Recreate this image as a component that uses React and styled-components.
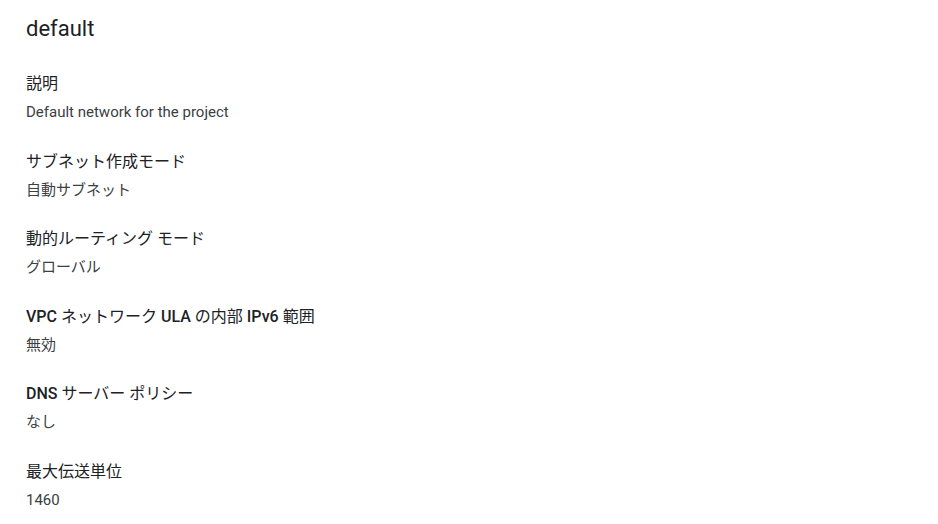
import React from 'react';
import styled, { createGlobalStyle } from 'styled-components';

const GlobalStyle = createGlobalStyle`
  body {
    margin: 0;
    background: #fff;
    font-family: Roboto, "Noto Sans CJK JP", "Liberation Sans", sans-serif;
  }
`;

const Page = styled.div`
  padding: 15px 26px 0;
`;

const Title = styled.h1`
  margin: 0 0 29px;
  font-size: 22px;
  line-height: 28px;
  font-weight: 400;
  color: #202124;
`;

const Section = styled.dl`
  margin: 0 0 27.6px;
`;

const Label = styled.dt`
  font-size: 16px;
  line-height: 24px;
  font-weight: 400;
  color: #202124;
  margin: 0 0 6px;
`;

// latin runs in the labels are medium, the japanese stays regular
const Latin = styled.span`
  font-weight: 500;
`;

const Value = styled.dd`
  margin: 0;
  font-size: 15px;
  line-height: 20px;
  color: #3c4043;
`;

const details = [
  { label: '説明', value: 'Default network for the project' },
  { label: 'サブネット作成モード', value: '自動サブネット' },
  { label: '動的ルーティング モード', value: 'グローバル' },
  { label: 'VPC ネットワーク ULA の内部 IPv6 範囲', value: '無効' },
  { label: 'DNS サーバー ポリシー', value: 'なし' },
  { label: '最大伝送単位', value: '1460' },
];

const renderLabel = (text) =>
  text
    .split(/([A-Za-z0-9]+)/)
    .map((part, i) =>
      /^[A-Za-z0-9]+$/.test(part) ? <Latin key={i}>{part}</Latin> : part
    );

export default function App() {
  return (
    <Page>
      <GlobalStyle />
      <Title>default</Title>
      {details.map((d) => (
        <Section key={d.label}>
          <Label>{renderLabel(d.label)}</Label>
          <Value>{d.value}</Value>
        </Section>
      ))}
    </Page>
  );
}
